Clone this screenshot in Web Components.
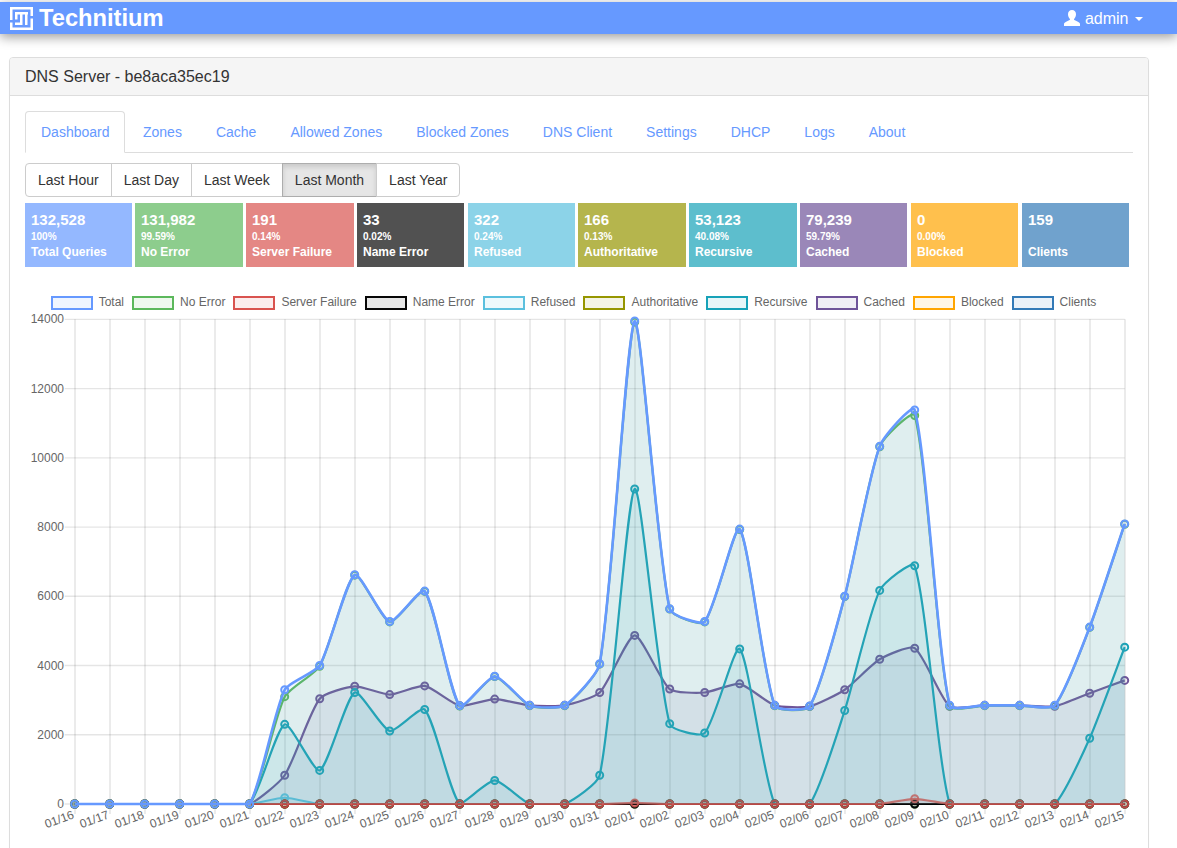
<!DOCTYPE html>
<html lang="en">
<head>
<meta charset="utf-8">
<title>Technitium DNS Server</title>
<style>
	html { overflow: hidden; }
	body {
		margin: 0;
		background: #fff;
		color: #333;
		font: 14px/20px "Liberation Sans", Arial, sans-serif;
	}
</style>
</head>
<body>
<tn-navbar user="admin"></tn-navbar>
<tn-panel heading="DNS Server - be8aca35ec19">
	<tn-tabs items="Dashboard,Zones,Cache,Allowed Zones,Blocked Zones,DNS Client,Settings,DHCP,Logs,About" active="Dashboard"></tn-tabs>
	<tn-range items="Last Hour,Last Day,Last Week,Last Month,Last Year" active="Last Month"></tn-range>
	<tn-stats>
		<tn-stat value="132,528" percent="100%" label="Total Queries" color="#94b8ff" width="107" gap="3"></tn-stat>
		<tn-stat value="131,982" percent="99.59%" label="No Error" color="#8dcd8d" width="108" gap="3"></tn-stat>
		<tn-stat value="191" percent="0.14%" label="Server Failure" color="#e48784" width="108" gap="3"></tn-stat>
		<tn-stat value="33" percent="0.02%" label="Name Error" color="#515151" width="107" gap="4"></tn-stat>
		<tn-stat value="322" percent="0.24%" label="Refused" color="#8cd3e8" width="107" gap="3"></tn-stat>
		<tn-stat value="166" percent="0.13%" label="Authoritative" color="#b5b54d" width="108" gap="3"></tn-stat>
		<tn-stat value="53,123" percent="40.08%" label="Recursive" color="#5dbecd" width="108" gap="3"></tn-stat>
		<tn-stat value="79,239" percent="59.79%" label="Cached" color="#9a87b8" width="107" gap="4"></tn-stat>
		<tn-stat value="0" percent="0.00%" label="Blocked" color="#ffc04d" width="107" gap="4"></tn-stat>
		<tn-stat value="159" percent="&nbsp;" label="Clients" color="#70a2cd" width="107" gap="0"></tn-stat>
	</tn-stats>
	<tn-chart></tn-chart>
</tn-panel>

<script>
// Top bar with the logo and the user menu
class TnNavbar extends HTMLElement {
	constructor() {
		super();
		this.attachShadow({mode: 'open'});
		this.shadowRoot.innerHTML = `
			<style>
				:host {
					display: flex;
					align-items: center;
					justify-content: space-between;
					height: 32px;
					margin-top: 2px;
					margin-bottom: 23px;
					padding: 0 34px 0 10px;
					background: #6699ff;
					color: #fff;
					box-shadow: 0 3px 12px rgba(0, 0, 0, .4);
				}
				.brand { display: flex; align-items: center; gap: 6px; font-size: 23.7px; font-weight: bold; }
				.user { display: flex; align-items: center; font-size: 16px; }
				.user svg { margin: -1px 5px 0 0; }
				.name { padding-top: 1px; }
				.caret {
					margin-left: 6.5px;
					border-top: 4px solid #fff;
					border-left: 4px solid transparent;
					border-right: 4px solid transparent;
					margin-top: 2px;
				}
			</style>
			<div class="brand">
				<svg width="23" height="23" viewBox="0 0 23 23" fill="#fff">
					<path d="M0 0h23v2.500H0zM0 2.500h2.500V13H0zM0 15.500h2.500v5H0zM0 20.500h23V23H0zM20.500 2.500H23V9h-2.500zM20.500 11.500H23v9h-2.500zM5 5h13v2.500H5zM5 7.500h2.500v5H5zM5 15.500h7.500V18H5zM10 7.500h2.500v8H10zM15 7.500h2.500V18H15z"/>
				</svg>
				<span>Technitium</span>
			</div>
			<div class="user">
				<svg width="16" height="16" viewBox="0 0 16 16" fill="#fff">
					<path d="M8 0c2.500 0 4 1.900 4 4.300 0 1.800-.7 3.400-1.700 4.400-.4.400-.4 1 .1 1.300l3.500 1.700c1 .5 2.100 1.200 2.100 2.300V16H0v-2c0-1.100 1.100-1.800 2.100-2.300L5.600 10c.5-.3.5-.9.100-1.300C4.700 7.700 4 6.100 4 4.300 4 1.900 5.500 0 8 0z"/>
				</svg>
				<span class="name">${this.getAttribute('user')}</span>
				<span class="caret"></span>
			</div>
		`;
	}
}
customElements.define('tn-navbar', TnNavbar);

// Bordered panel with a grey heading
class TnPanel extends HTMLElement {
	constructor() {
		super();
		this.attachShadow({mode: 'open'});
		this.shadowRoot.innerHTML = `
			<style>
				:host {
					display: block;
					box-sizing: border-box;
					width: 1140px;
					margin-left: 9px;
					border: 1px solid #ddd;
					border-radius: 4px;
					background: #fff;
					box-shadow: 0 1px 1px rgba(0, 0, 0, .05);
				}
				header {
					height: 38px;
					box-sizing: border-box;
					padding: 10px 15px;
					background: #f5f5f5;
					border-bottom: 1px solid #ddd;
					border-radius: 3px 3px 0 0;
					font-size: 16px;
					line-height: 18px;
					color: #333;
				}
				main { padding: 15px; }
			</style>
			<header>${this.getAttribute('heading')}</header>
			<main><slot></slot></main>
		`;
	}
}
customElements.define('tn-panel', TnPanel);

class TnTabs extends HTMLElement {
	constructor() {
		super();
		this.attachShadow({mode: 'open'});
		const active = this.getAttribute('active');
		const tabs = this.getAttribute('items').split(',').map(name =>
			`<a class="${name === active ? 'active' : ''}">${name}</a>`).join('');
		this.shadowRoot.innerHTML = `
			<style>
				:host { display: flex; gap: 2px; border-bottom: 1px solid #ddd; height: 41px; }
				a {
					height: 42px;
					box-sizing: border-box;
					padding: 10px 15px;
					border: 1px solid transparent;
					border-radius: 4px 4px 0 0;
					color: #6699ff;
				}
				a.active { background: #fff; border-color: #ddd #ddd transparent; padding-right: 14.5px; }
			</style>
			${tabs}
		`;
	}
}
customElements.define('tn-tabs', TnTabs);

class TnRange extends HTMLElement {
	constructor() {
		super();
		this.attachShadow({mode: 'open'});
		const active = this.getAttribute('active');
		const buttons = this.getAttribute('items').split(',').map(name =>
			`<button class="${name === active ? 'active' : ''}">${name}</button>`).join('');
		this.shadowRoot.innerHTML = `
			<style>
				:host { display: flex; margin: 10px 0 6px; }
				button {
					height: 34px;
					padding: 6px 12px;
					margin-left: -1px;
					background: #fff;
					border: 1px solid #ccc;
					color: #333;
					font: 14px/20px "Liberation Sans", Arial, sans-serif;
				}
				button:first-of-type { margin-left: 0; border-radius: 4px 0 0 4px; }
				button:last-of-type { border-radius: 0 4px 4px 0; padding-right: 11px; }
				button.active {
					background: #e6e6e6;
					border-color: #adadad;
					box-shadow: inset 0 3px 5px rgba(0, 0, 0, .125);
				}
			</style>
			${buttons}
		`;
	}
}
customElements.define('tn-range', TnRange);

class TnStats extends HTMLElement {
	constructor() {
		super();
		this.attachShadow({mode: 'open'});
		this.shadowRoot.innerHTML = `
			<style>:host { display: flex; }</style>
			<slot></slot>
		`;
	}
}
customElements.define('tn-stats', TnStats);

class TnStat extends HTMLElement {
	constructor() {
		super();
		this.attachShadow({mode: 'open'});
		this.shadowRoot.innerHTML = `
			<style>
				:host {
					display: block;
					box-sizing: border-box;
					height: 64px;
					padding: 7px 6px 0;
					color: #fff;
					font-weight: bold;
					background: ${this.getAttribute('color')};
					width: ${this.getAttribute('width')}px;
					margin-right: ${this.getAttribute('gap')}px;
				}
				.value { font-size: 15px; line-height: 20px; }
				.percent { font-size: 10px; line-height: 12px; margin-top: 1px; }
				.label { font-size: 12px; line-height: 18px; }
			</style>
			<div class="value">${this.getAttribute('value')}</div>
			<div class="percent">${this.getAttribute('percent')}</div>
			<div class="label">${this.getAttribute('label')}</div>
		`;
	}
}
customElements.define('tn-stat', TnStat);

// Line chart drawn with SVG, same curve maths as a chart.js spline
const CHART_LABELS = ['01/16','01/17','01/18','01/19','01/20','01/21','01/22','01/23','01/24','01/25','01/26','01/27','01/28','01/29','01/30','01/31','02/01','02/02','02/03','02/04','02/05','02/06','02/07','02/08','02/09','02/10','02/11','02/12','02/13','02/14','02/15'];
const ZEROS = CHART_LABELS.map(() => 0);
const withValues = values => ZEROS.map((v, i) => values[i] || 0);
const CHART_SERIES = [
	{name: 'Total', color: '102,153,255', width: 2.6, data: [0,0,0,0,0,0,3300,4000,6620,5270,6150,2840,3690,2850,2850,4050,13950,5640,5270,7940,2850,2830,6000,10330,11380,2850,2850,2850,2850,5110,8090]},
	{name: 'No Error', color: '92,184,92', data: [0,0,0,0,0,0,3100,3980,6610,5260,6140,2830,3680,2840,2840,4040,13920,5630,5260,7930,2840,2820,5990,10320,11220,2830,2840,2840,2840,5100,8080]},
	{name: 'Server Failure', color: '217,83,79', alpha: .85, data: withValues({16: 30, 24: 150})},
	{name: 'Name Error', color: '7,7,7', data: ZEROS},
	{name: 'Refused', color: '91,192,222', data: withValues({6: 180})},
	{name: 'Authoritative', color: '150,150,0', data: ZEROS},
	{name: 'Recursive', color: '23,162,184', data: [0,0,0,0,0,0,2300,970,3220,2110,2730,0,680,0,0,830,9100,2320,2050,4480,0,0,2700,6170,6880,0,0,0,0,1900,4530]},
	{name: 'Cached', color: '111,84,153', data: [0,0,0,0,0,0,830,3040,3400,3160,3410,2840,3030,2850,2850,3220,4870,3320,3220,3470,2850,2820,3300,4180,4500,2820,2850,2850,2820,3200,3570]},
	{name: 'Blocked', color: '255,165,0', data: ZEROS},
	{name: 'Clients', color: '51,122,183', data: ZEROS}
];

const X0 = 74.7, X_STEP = 35, Y0 = 804, Y_SCALE = 484.7 / 14000, TOP = 319.3, TENSION = 0.2;
const xAt = i => X0 + i * X_STEP;
const yAt = v => Y0 - v * Y_SCALE;
const clamp = (v, lo, hi) => Math.min(hi, Math.max(lo, v));

function splinePath(points) {
	const ctrl = points.map((p, i) => {
		const prev = points[i - 1] || p, next = points[i + 1] || p;
		const d01 = Math.hypot(p.x - prev.x, p.y - prev.y);
		const d12 = Math.hypot(next.x - p.x, next.y - p.y);
		const total = d01 + d12 || 1;
		const fa = TENSION * d01 / total, fb = TENSION * d12 / total;
		return {
			inX: clamp(p.x - fa * (next.x - prev.x), X0, xAt(30)),
			inY: clamp(p.y - fa * (next.y - prev.y), TOP, Y0),
			outX: clamp(p.x + fb * (next.x - prev.x), X0, xAt(30)),
			outY: clamp(p.y + fb * (next.y - prev.y), TOP, Y0)
		};
	});
	let d = `M${points[0].x} ${points[0].y}`;
	for (let i = 1; i < points.length; i++) {
		d += `C${ctrl[i - 1].outX} ${ctrl[i - 1].outY} ${ctrl[i].inX} ${ctrl[i].inY} ${points[i].x} ${points[i].y}`;
	}
	return d;
}

class TnChart extends HTMLElement {
	constructor() {
		super();
		this.attachShadow({mode: 'open'});

		const legend = CHART_SERIES.map(s => `
			<span class="item"><i style="border-color:rgb(${s.color});background:rgba(${s.color},.1)"></i>${s.name}</span>
		`).join('');

		let grid = '';
		for (let v = 0; v <= 14000; v += 2000) {
			const y = yAt(v);
			grid += `<line x1="${X0 - 10}" x2="${xAt(30)}" y1="${y}" y2="${y}" stroke="rgba(0,0,0,.1)" stroke-width="1.300"/>`;
			grid += `<text x="64" y="${y + 4}" text-anchor="end">${v}</text>`;
		}
		CHART_LABELS.forEach((label, i) => {
			const x = xAt(i);
			const gridX = Math.round(x);
			grid += `<line x1="${gridX}" x2="${gridX}" y1="${TOP}" y2="${Y0 + 10}" stroke="rgba(0,0,0,.08)" stroke-width="2"/>`;
			grid += `<text text-anchor="end" transform="translate(${x} 818) rotate(-20)">${label}</text>`;
		});

		// first dataset is painted last, so it ends up on top
		const series = CHART_SERIES.slice().reverse().map(s => {
			const pts = s.data.map((v, i) => ({x: xAt(i), y: yAt(v)}));
			const line = splinePath(pts);
			const stroke = `rgba(${s.color},${s.alpha || 1})`;
			const dots = pts.map(p =>
				`<circle cx="${p.x}" cy="${p.y}" r="3.500" fill="rgba(${s.color},.1)" stroke="${stroke}" stroke-width="2"/>`).join('');
			return `
				<path d="${line}L${xAt(30)} ${Y0}L${X0} ${Y0}Z" fill="rgba(${s.color},.1)"/>
				<path d="${line}" fill="none" stroke="${stroke}" stroke-width="${s.width || 2.2}"/>
				${dots}
			`;
		}).join('');

		this.shadowRoot.innerHTML = `
			<style>
				:host { display: block; margin-top: 29px; color: #666; font-size: 12px; }
				.legend { display: flex; justify-content: center; gap: 8px; line-height: 13px; height: 16px; margin-left: -11px; }
				.item { display: flex; align-items: flex-start; }
				i { box-sizing: border-box; display: block; width: 42px; height: 14px; border: 2px solid; margin-right: 6px; }
				svg { display: block; overflow: visible; }
				text { font: 12px "Liberation Sans", Arial, sans-serif; fill: #666; }
			</style>
			<div class="legend">${legend}</div>
			<svg width="1104" height="540" viewBox="25 312 1104 540">${grid}${series}</svg>
		`;
	}
}
customElements.define('tn-chart', TnChart);
</script>
</body>
</html>
